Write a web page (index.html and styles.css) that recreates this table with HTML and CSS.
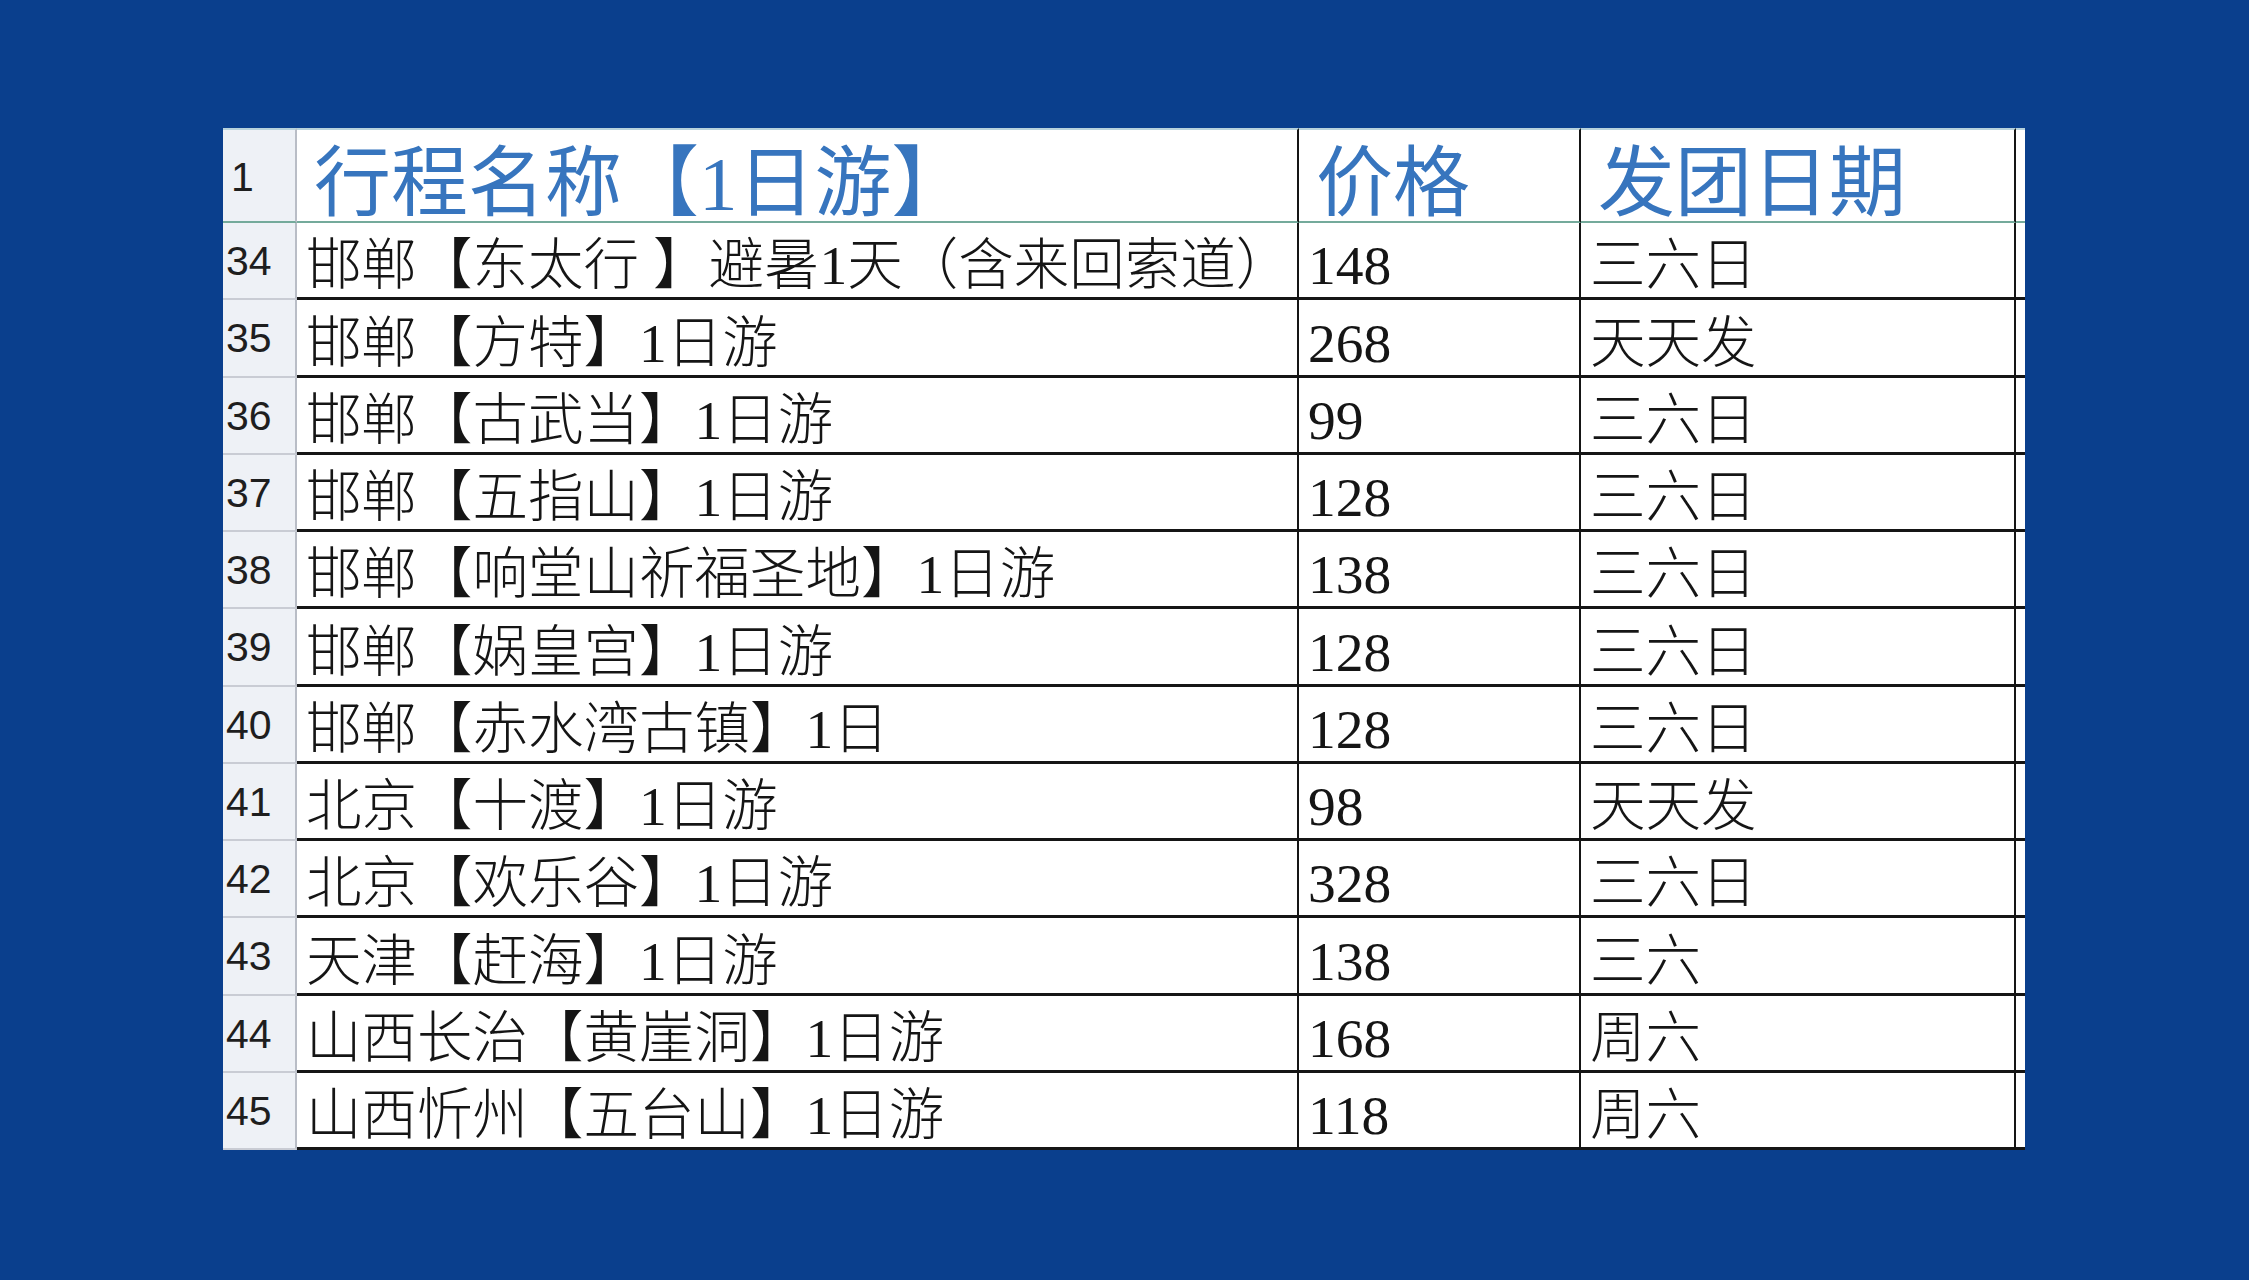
FILE: index.html
```html
<!DOCTYPE html>
<html lang="zh-CN">
<head>
<meta charset="utf-8">
<title>行程表</title>
<link rel="stylesheet" href="styles.css">
</head>
<body>
<div class="sheet">
  <div class="row head">
    <div class="cell num">1</div>
    <div class="cell">行程名称【1日游】</div>
    <div class="cell">价格</div>
    <div class="cell">发团日期</div>
    <div class="cell edge"></div>
  </div>
  <div class="row"><div class="cell num">34</div><div class="cell">邯郸【东太行 】避暑1天（含来回索道）</div><div class="cell">148</div><div class="cell">三六日</div><div class="cell edge"></div></div>
  <div class="row"><div class="cell num">35</div><div class="cell">邯郸【方特】1日游</div><div class="cell">268</div><div class="cell">天天发</div><div class="cell edge"></div></div>
  <div class="row"><div class="cell num">36</div><div class="cell">邯郸【古武当】1日游</div><div class="cell">99</div><div class="cell">三六日</div><div class="cell edge"></div></div>
  <div class="row"><div class="cell num">37</div><div class="cell">邯郸【五指山】1日游</div><div class="cell">128</div><div class="cell">三六日</div><div class="cell edge"></div></div>
  <div class="row"><div class="cell num">38</div><div class="cell">邯郸【响堂山祈福圣地】1日游</div><div class="cell">138</div><div class="cell">三六日</div><div class="cell edge"></div></div>
  <div class="row"><div class="cell num">39</div><div class="cell">邯郸【娲皇宫】1日游</div><div class="cell">128</div><div class="cell">三六日</div><div class="cell edge"></div></div>
  <div class="row"><div class="cell num">40</div><div class="cell">邯郸【赤水湾古镇】1日</div><div class="cell">128</div><div class="cell">三六日</div><div class="cell edge"></div></div>
  <div class="row"><div class="cell num">41</div><div class="cell">北京【十渡】1日游</div><div class="cell">98</div><div class="cell">天天发</div><div class="cell edge"></div></div>
  <div class="row"><div class="cell num">42</div><div class="cell">北京【欢乐谷】1日游</div><div class="cell">328</div><div class="cell">三六日</div><div class="cell edge"></div></div>
  <div class="row"><div class="cell num">43</div><div class="cell">天津【赶海】1日游</div><div class="cell">138</div><div class="cell">三六</div><div class="cell edge"></div></div>
  <div class="row"><div class="cell num">44</div><div class="cell">山西长治【黄崖洞】1日游</div><div class="cell">168</div><div class="cell">周六</div><div class="cell edge"></div></div>
  <div class="row"><div class="cell num">45</div><div class="cell">山西忻州【五台山】1日游</div><div class="cell">118</div><div class="cell">周六</div><div class="cell edge"></div></div>
</div>
</body>
</html>
```

FILE: styles.css
```css
html, body {
  margin: 0;
  padding: 0;
}
body {
  width: 2249px;
  height: 1280px;
  overflow: hidden;
  background: #0a3f8d;
}
.sheet {
  margin: 128px 0 0 223px;
  width: 1802px;
  display: flex;
  flex-direction: column;
  background: #ffffff;
}
.row {
  display: grid;
  grid-template-columns: 74px 1002px 282px 435px 9px;
  height: 77.25px;
}
.cell {
  box-sizing: border-box;
  display: flex;
  align-items: center;
  padding: 12px 0 0 9px;
  overflow: hidden;
  white-space: nowrap;
  border-right: 2px solid #151515;
  border-bottom: 3px solid #151515;
  font-family: "Liberation Serif", "Noto Sans CJK SC", serif;
  font-size: 55.5px;
  font-weight: 300;
  line-height: 1;
  color: #151515;
  background: #ffffff;
}
.cell.edge {
  border-right: none;
  padding: 0;
}
.cell.num {
  padding: 2px 0 0 3px;
  background: #eef1f6;
  border-right: 2px solid #b9bdc6;
  border-bottom: 2px solid #c9ccd4;
  font-family: "Liberation Sans", Arial, sans-serif;
  font-size: 41px;
  font-weight: 400;
  color: #1e1e1e;
}
.head {
  height: 95px;
}
.head .cell {
  align-items: flex-start;
  overflow: visible;
  border-top: 2px solid #b7d2dc;
  border-bottom: 2px solid #74aa9b;
  padding: 20px 0 0 17px;
  font-size: 77px;
  font-weight: 400;
  line-height: 0.9;
  color: #3775be;
}
.head .cell.num {
  align-items: center;
  padding: 4px 0 0 8px;
  font-size: 41px;
  font-weight: 400;
  line-height: 1;
  color: #1e1e1e;
}
.head .cell.edge {
  padding: 0;
}
```
